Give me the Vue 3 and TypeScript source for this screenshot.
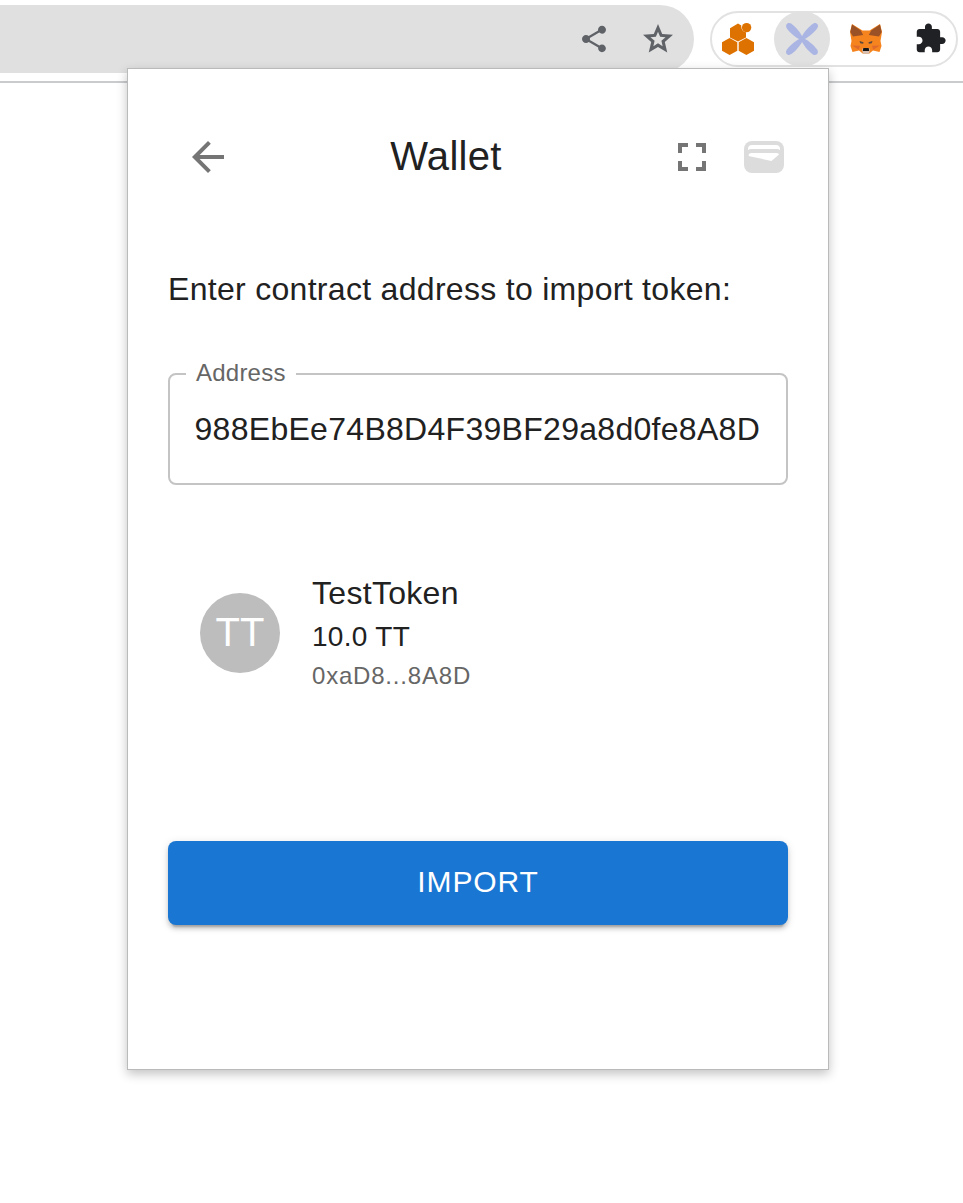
<script setup lang="ts">
import { ref } from 'vue'

interface Token {
  name: string
  symbol: string
  balance: string
  address: string
}

const address = ref<string>('988EbEe74B8D4F39BF29a8d0fe8A8D')
const token: Token = {
  name: 'TestToken',
  symbol: 'TT',
  balance: '10.0',
  address: '0xaD8...8A8D',
}
const bladeAngles: number[] = [0, 90, 180, 270]
</script>

<template>
  <div class="browser">
    <header class="toolbar">
      <div class="omnibox">
        <svg class="share" viewBox="0 0 24 24">
          <path d="M18 16.08c-.76 0-1.44.3-1.96.77L8.91 12.7c.05-.23.09-.46.09-.7s-.04-.47-.09-.7l7.05-4.11c.54.5 1.25.81 2.04.81 1.66 0 3-1.34 3-3s-1.34-3-3-3-3 1.34-3 3c0 .24.04.47.09.7L8.04 9.81C7.5 9.31 6.79 9 6 9c-1.66 0-3 1.34-3 3s1.34 3 3 3c.79 0 1.5-.31 2.04-.81l7.12 4.16c-.05.21-.08.43-.08.65 0 1.61 1.31 2.92 2.92 2.92s2.92-1.31 2.92-2.92-1.31-2.92-2.92-2.92z" />
        </svg>
        <svg class="star" viewBox="0 0 24 24">
          <path d="M22 9.24l-7.19-.62L12 2 9.19 8.63 2 9.24l5.46 4.73L5.82 21 12 17.27 18.18 21l-1.63-7.03L22 9.24zM12 14.9l-3.1 1.87.83-3.53-2.74-2.37 3.61-.31L12 7.23l1.4 3.330 3.610.310-2.740 2.370.83 3.530z" />
        </svg>
      </div>
      <div class="extensions">
        <span class="slot">
          <svg class="ext" viewBox="0 0 32 32">
            <g fill="#de7200">
              <path d="M7.600 15l7.700 4.300v8.500L7.600 32 0 27.800v-8.600z" />
              <path d="M24.400 15l7.600 4.200v8.600L24.400 32l-7.700-4.200v-8.500z" />
              <path d="M16 .5l3.300 1.900c-.3 3.400 1.500 6.200 4.700 6.800v5.200L16 18.600l-8-4.200V5.200z" />
              <circle cx="24.600" cy="4.600" r="4.700" />
            </g>
          </svg>
        </span>
        <span class="slot active">
          <svg class="ext" viewBox="0 0 32 32">
            <path
              v-for="angle in bladeAngles"
              :key="angle"
              fill="#aab5e3"
              d="M16 17.500C11 15.500 4.500 10.500 .9 5.400-1.400 2 1.700-1.400 5.100.6 10.200 4.200 15.200 10.500 17.300 16z"
              :transform="`rotate(${angle} 16 16)`"
            />
          </svg>
        </span>
        <span class="slot">
          <svg class="ext" viewBox="0 0 32 32">
            <path d="M2 1l10.500 6.500h7L30 1l2 8-1.500 9 1 5-2 6-6.500-1.500-4 3.300h-6L9 27.500 2.500 29l-2-6 1-5L0 9z" fill="#f5841f" />
            <path d="M2 1.500l8.800 6 2.400 4.500-10.200 1.500L.3 9zM30 1.500l-8.800 6-2.400 4.500 10.200 1.500L31.700 9z" fill="#9a5125" />
            <path d="M2 22.500l8 .3-1.200 4zM30 22.500l-8 .3 1.200 4z" fill="#e0692c" />
            <path d="M9.500 17.900l4 1.400-.3 1.500-3-.5zM22.500 17.900l-4 1.400.3 1.500 3-.5z" fill="#5a493c" />
            <path d="M12 27l1-2h6l1 2-1 3.700h-6z" fill="#d6c0b3" />
            <path d="M13.300 25h5.400l.5 3h-6.400z" fill="#161616" />
          </svg>
        </span>
        <span class="slot">
          <svg class="puzzle" viewBox="0 0 24 24">
            <path d="M20.500 11H19V7c0-1.100-.9-2-2-2h-4V3.500C13 2.120 11.880 1 10.500 1S8 2.120 8 3.500V5H4c-1.100 0-1.990.9-1.990 2v3.800H3.500c1.490 0 2.700 1.210 2.700 2.700s-1.210 2.700-2.700 2.700H2V20c0 1.100.9 2 2 2h3.800v-1.500c0-1.490 1.210-2.700 2.700-2.700s2.700 1.210 2.700 2.700V22H17c1.100 0 2-.9 2-2v-4h1.500c1.380 0 2.500-1.120 2.500-2.500S21.880 11 20.500 11z" />
          </svg>
        </span>
      </div>
    </header>

    <main class="popup">
      <nav class="nav">
        <svg class="icon" viewBox="0 0 24 24">
          <path d="M20 11H7.830l5.590-5.590L12 4l-8 8 8 8 1.410-1.410L7.830 13H20v-2z" />
        </svg>
        <h1 class="title">Wallet</h1>
        <svg class="icon" viewBox="0 0 24 24">
          <path d="M7 14H5v5h5v-2H7v-3zm-2-4h2V7h3V5H5v5zm12 7h-3v2h5v-5h-2v3zM14 5v2h3v3h2V5h-5z" />
        </svg>
        <svg class="wallet" viewBox="0 0 40 32">
          <rect width="40" height="32" rx="8" fill="#dcdcdc" />
          <path d="M4 9.200V8q0-4 4-4h24q4 0 4 4v1.200q-1-1.200-3-1.200H7q-2 0-3 1.200z" fill="#fff" />
          <path d="M4.500 14q.5-2 3-2h25q2.500 0 2.500 1.500L27.500 20 5.500 15.200q-1-.3-1-1.200z" fill="#fff" />
        </svg>
      </nav>

      <p class="prompt">Enter contract address to import token:</p>

      <fieldset class="field">
        <legend>Address</legend>
        <div class="value">{{ address }}</div>
      </fieldset>

      <section class="token">
        <div class="avatar">{{ token.symbol }}</div>
        <div class="info">
          <div class="name">{{ token.name }}</div>
          <div class="balance">{{ token.balance }} {{ token.symbol }}</div>
          <div class="hash">{{ token.address }}</div>
        </div>
      </section>

      <button class="import" type="button">IMPORT</button>
    </main>
  </div>
</template>

<style>
body {
  background: #fff;
}
</style>

<style scoped>
* {
  box-sizing: border-box;
}
.browser {
  width: 963px;
  height: 1203px;
  overflow: hidden;
  font-family: "Liberation Sans", Arial, sans-serif;
  color: #212121;
}
svg {
  display: block;
  flex: none;
}
.toolbar {
  display: flex;
  height: 83px;
  padding: 5px 5px 0 0;
  border-bottom: 2px solid #c9cbcc;
}
.omnibox {
  display: flex;
  align-items: center;
  justify-content: flex-end;
  width: 694px;
  height: 68px;
  padding-right: 18px;
  gap: 30px;
  border-radius: 0 34px 34px 0;
  background: #e0e0e0;
  fill: #5f6368;
}
.share {
  width: 32px;
  height: 32px;
}
.star {
  width: 36px;
  height: 36px;
}
.extensions {
  display: flex;
  align-items: center;
  gap: 8px;
  width: 248px;
  height: 56px;
  margin: 6px 0 0 16px;
  border: 2px solid #e2e2e2;
  border-radius: 28px;
}
.slot {
  display: flex;
  flex: none;
  align-items: center;
  justify-content: center;
  width: 56px;
  height: 56px;
  border-radius: 50%;
}
.slot:first-child {
  margin-left: -2px;
}
.active {
  background: #e1e1e1;
}
.ext {
  width: 32px;
  height: 32px;
  overflow: visible;
}
.puzzle {
  width: 33px;
  height: 33px;
  margin-bottom: 1px;
  fill: #202124;
}
.popup {
  position: relative;
  width: 702px;
  height: 1002px;
  margin: -15px 0 0 127px;
  padding: 40px;
  border: 1px solid #b9bbbb;
  background: #fff;
  box-shadow: 0 4px 10px rgba(0, 0, 0, 0.24);
}
.nav {
  display: flex;
  align-items: center;
  height: 96px;
  padding: 0 4px 0 16px;
}
.icon {
  width: 48px;
  height: 48px;
  fill: #757575;
}
.title {
  flex: 1;
  margin: 0;
  padding: 0 8px 2px 0;
  text-align: center;
  font-size: 40px;
  font-weight: 400;
  line-height: 64px;
  letter-spacing: 0.3px;
}
.wallet {
  width: 40px;
  height: 32px;
  margin-left: 28px;
}
.prompt {
  margin: 60px 0 0;
  font-size: 32px;
  line-height: 48px;
  letter-spacing: 0.3px;
}
.field {
  min-width: 0;
  height: 124px;
  margin: 48px 0 0;
  padding: 0 24px;
  border: 2px solid #c4c4c4;
  border-radius: 8px;
}
.field legend {
  margin-left: -8px;
  padding: 0 10px 2px;
  font-size: 24px;
  line-height: 24px;
  letter-spacing: 0.225px;
  color: #666;
}
.value {
  padding: 19px 0 0 0.5px;
  font-size: 32px;
  line-height: 46px;
  letter-spacing: 0.29px;
  white-space: nowrap;
}
.token {
  display: flex;
  align-items: center;
  height: 136px;
  margin-top: 80px;
  padding-left: 32px;
}
.avatar {
  width: 80px;
  height: 80px;
  border-radius: 50%;
  background: #bdbdbd;
  color: #fff;
  font-size: 40px;
  line-height: 78px;
  text-align: center;
}
.info {
  margin-left: 32px;
}
.name {
  font-size: 32px;
  line-height: 48px;
  letter-spacing: 0.3px;
}
.balance {
  font-size: 28px;
  line-height: 40px;
  letter-spacing: 0.3px;
}
.hash {
  padding-bottom: 2px;
  font-size: 24px;
  line-height: 38px;
  letter-spacing: 0.8px;
  color: #666;
}
.import {
  display: block;
  width: 620px;
  height: 84px;
  margin: 140px 0 0;
  padding: 0 0 2px;
  border: 0;
  border-radius: 8px;
  background: #1976d2;
  color: #fff;
  font: 400 30px/82px "Liberation Sans", Arial, sans-serif;
  letter-spacing: 0.857px;
  box-shadow: 0 6px 2px -4px rgba(0, 0, 0, 0.2), 0 4px 4px rgba(0, 0, 0, 0.14), 0 2px 10px rgba(0, 0, 0, 0.12);
}
</style>
